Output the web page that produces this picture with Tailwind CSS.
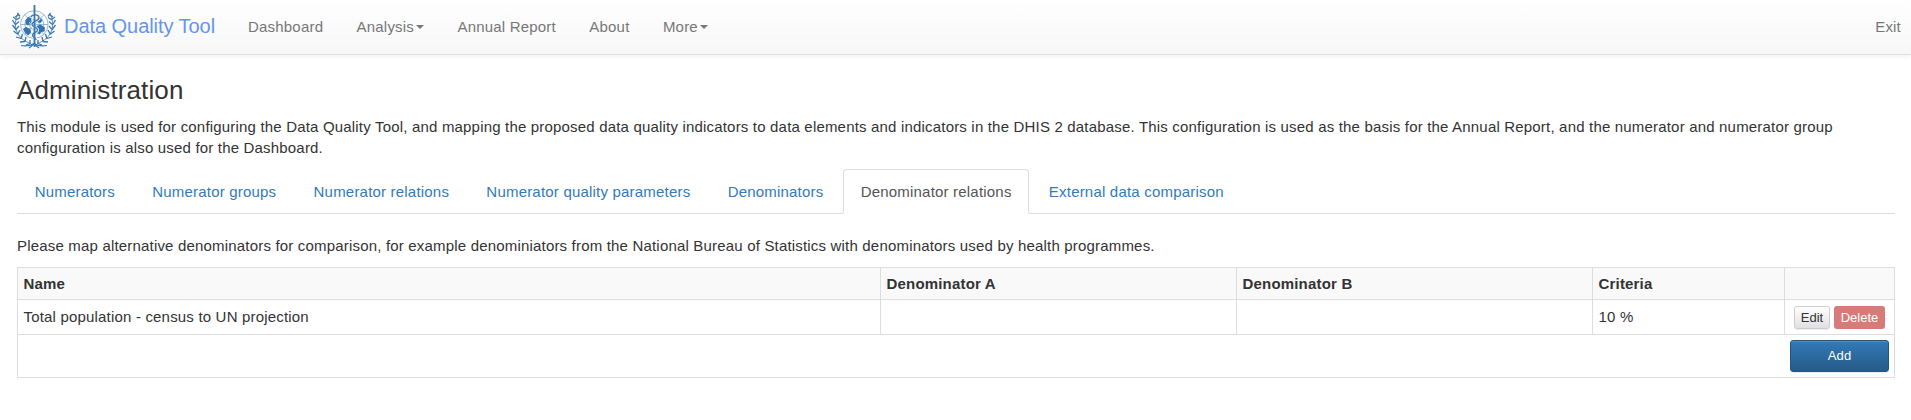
<!DOCTYPE html>
<html lang="en">
<head>
<meta charset="utf-8">
<title>Data Quality Tool</title>
<script src="https://cdn.jsdelivr.net/npm/@tailwindcss/browser@4"></script>
</head>
<body class="bg-white font-['Liberation_Sans',Arial,sans-serif] text-[15px] leading-[21.4px] tracking-[0.184px] text-[#333]">
<nav class="h-[55px] flex items-start border-b border-[#e0e0e0] bg-linear-to-b from-white to-[#f7f7f7] shadow-[0_1px_5px_rgba(0,0,0,0.075)] tracking-[0.2px] whitespace-nowrap text-[#777]">
  <svg class="ml-[12px] mt-[5px] w-[44px] h-[44px] shrink-0" viewBox="0 0 44 44" fill="none" stroke="#3a78b5">
    <!-- globe grid -->
    <g stroke-width=".7" opacity=".7">
      <circle cx="22.300" cy="19.500" r="13.800"/><circle cx="22.300" cy="19.500" r="9.500"/><circle cx="22.300" cy="19.500" r="5"/>
      <path d="M8.500 19.500H36M12.500 9.700L32 29.300M32 9.700L12.500 29.300"/>
    </g>
    <!-- continents -->
    <g fill="#3474b0" stroke="none">
      <path d="M13.500 15l3-3 3 1-.5 3-2 1.500.5 2-2 1-2-2zM25 12l3 .5 2.500 3-2 2.500-3.500-1zM24.500 21l4-1.500 4.500 3-.5 4-3 .5-2 2.500-3-2zM11 24l3-2 4.500 2 .5 3.500-3 3-3-2.500zM18 17l2.500-1 .5 4-2.500 1z"/>
    </g>
    <!-- staff and serpent -->
    <path d="M19 12c1-3 8-3 8 1 0 3-7 3-7 6.500 0 2.500 5.500 2.500 5.500 5.500s-5 2-5 5 3.500 2 3.500 5" stroke="#fafafa" stroke-width="3"/>
    <path d="M22.500 0V42" stroke-width="1.800"/>
    <path d="M19 12c1-3 8-3 8 1 0 3-7 3-7 6.500 0 2.500 5.500 2.500 5.500 5.500s-5 2-5 5 3.500 2 3.500 5" stroke-width="1.400"/>
    <!-- laurel wreath: stems, then leaves -->
    <path d="M6 9C0 20 4 34 19 38.500M38 9C44 20 40 34 25 38.500" stroke-width=".8"/>
    <path d="M6 10l-3 2M5.500 8l2.500 3.500M4 14l-3-2M4 15l4-2.500M3 19l-2.500-4M3 20l4-3.500M3.500 24L.5 20M3.500 25l3.500-4M5.500 29L1.500 26M5.500 29.500l2.500-4.500M9 33.500L4 32M9 34l1.500-5M13 36.500L8 37M13 36.500l1-4.500M18 38.500l-4 1.500M18 38.500l0-3.500" stroke-width="1.300"/>
    <path transform="matrix(-1 0 0 1 44 0)" d="M6 10l-3 2M5.500 8l2.500 3.500M4 14l-3-2M4 15l4-2.500M3 19l-2.500-4M3 20l4-3.500M3.500 24L.5 20M3.500 25l3.500-4M5.500 29L1.500 26M5.500 29.500l2.500-4.500M9 33.500L4 32M9 34l1.500-5M13 36.500L8 37M13 36.500l1-4.500M18 38.500l-4 1.500M18 38.500l0-3.500" stroke-width="1.300"/>
    <path d="M9 40.500c5 1 9 .5 13-2 4 2.500 8 3 13 2M17 43l5-4 5 4" stroke-width="1.200"/>
  </svg>
  <a class="ml-[8px] mt-[16px] w-[184px] shrink-0 text-[20px] leading-[20px] tracking-[-0.05px] text-[#6495ed]">Data Quality Tool</a>
  <div class="mt-[16px] flex gap-[33.4px]">
    <a>Dashboard</a>
    <a class="flex items-center">Analysis<i class="ml-[2px] border-x-4 border-t-4 border-x-transparent border-t-[#777]"></i></a>
    <a>Annual Report</a>
    <a>About</a>
    <a class="flex items-center">More<i class="ml-[2px] border-x-4 border-t-4 border-x-transparent border-t-[#777]"></i></a>
  </div>
  <a class="ml-auto mr-[10px] mt-[16px]">Exit</a>
</nav>
<main class="ml-[17px] w-[1878px]">
  <h3 class="pt-[21px] text-[26px] leading-[28px] tracking-[0.13px]">Administration</h3>
  <p class="mt-[12px] h-[43px] w-[1840px]">This module is used for configuring the Data Quality Tool, and mapping the proposed data quality indicators to data elements and indicators in the DHIS 2 database. This configuration is used as the basis for the Annual Report, and the numerator and numerator group configuration is also used for the Dashboard.</p>
  <ul class="mt-[10px] h-[45px] flex gap-[2px] border-b border-[#ddd] whitespace-nowrap tracking-[0.2px] text-[#337ab7]">
    <li class="h-[45px] px-[17.630px] pt-[12px]">Numerators</li>
    <li class="h-[45px] px-[17.630px] pt-[12px]">Numerator groups</li>
    <li class="h-[45px] px-[17.630px] pt-[12px]">Numerator relations</li>
    <li class="h-[45px] px-[17.630px] pt-[12px]">Numerator quality parameters</li>
    <li class="h-[45px] px-[17.630px] pt-[12px]">Denominators</li>
    <li class="h-[45px] px-[16.630px] pt-[11px] border border-b-white border-[#ddd] rounded-t-[4px] bg-white text-[#555]">Denominator relations</li>
    <li class="h-[45px] px-[17.630px] pt-[12px]">External data comparison</li>
  </ul>
  <p class="mt-[21px] h-[21px]">Please map alternative denominators for comparison, for example denominiators from the National Bureau of Statistics with denominators used by health programmes.</p>
  <div class="mt-[11px] border border-[#ddd]">
    <div class="h-[32px] grid grid-cols-[863px_356px_356px_192px_1fr] border-b border-[#ddd] bg-[#f9f9f9] font-bold leading-[32px] *:pl-[5.500px] *:border-r *:border-[#ddd]">
      <div>Name</div><div>Denominator A</div><div>Denominator B</div><div>Criteria</div><div class="border-r-0!"></div>
    </div>
    <div class="h-[35px] grid grid-cols-[863px_356px_356px_192px_1fr] border-b border-[#ddd] leading-[34px] *:pl-[5.500px] *:border-r *:border-[#ddd]">
      <div>Total population - census to UN projection</div><div></div><div></div><div>10 %</div>
      <div class="border-r-0! pl-[9px]! pt-[6px] flex gap-[4px] text-[13px] leading-[21px] tracking-normal text-center">
        <button class="w-[36px] h-[23px] rounded-[3px] border border-[#ccc] bg-linear-to-b from-white to-[#e0e0e0] shadow-[0_1px_1px_rgba(0,0,0,0.075)]">Edit</button>
        <button class="w-[51px] h-[23px] rounded-[3px] bg-[#d67b78] text-white">Delete</button>
      </div>
    </div>
    <div class="h-[42px] flex justify-end pt-[5px] pr-[5px]">
      <button class="w-[99px] h-[32px] rounded-[3px] border border-[#245580] bg-linear-to-b from-[#337ab7] to-[#265a88] text-[13px] text-white shadow-[inset_0_1px_0_rgba(255,255,255,0.15),0_1px_1px_rgba(0,0,0,0.075)]">Add</button>
    </div>
  </div>
</main>
</body>
</html>
